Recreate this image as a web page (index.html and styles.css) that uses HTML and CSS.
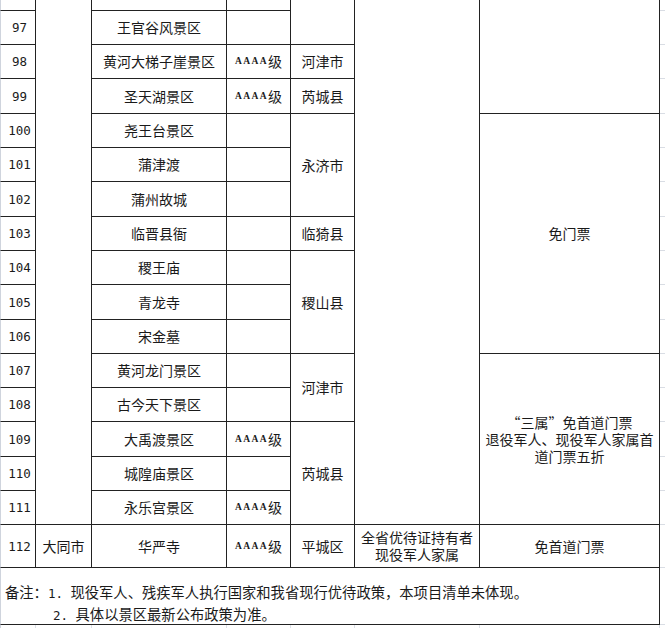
FILE: index.html
```html
<!DOCTYPE html>
<html lang="zh-CN">
<head>
<meta charset="utf-8">
<title>景区优待政策</title>
<link rel="stylesheet" href="styles.css">
</head>
<body>
<div class="sheet">
  <!-- row 96 (partial) -->
  <div class="c num"></div>
  <div class="c r16"></div>
  <div class="c"></div>
  <div class="c"></div>
  <div class="c r2"></div>
  <div class="c r16"></div>
  <div class="c r4"></div>
  <div class="tick"></div>

  <!-- 97 -->
  <div class="c num">97</div>
  <div class="c">王官谷风景区</div>
  <div class="c"></div>
  <div class="tick"></div>

  <!-- 98 -->
  <div class="c num">98</div>
  <div class="c">黄河大梯子崖景区</div>
  <div class="c"><span class="lvl">AAAA</span>级</div>
  <div class="c">河津市</div>
  <div class="tick"></div>

  <!-- 99 -->
  <div class="c num">99</div>
  <div class="c">圣天湖景区</div>
  <div class="c"><span class="lvl">AAAA</span>级</div>
  <div class="c">芮城县</div>
  <div class="tick"></div>

  <!-- 100 -->
  <div class="c num">100</div>
  <div class="c">尧王台景区</div>
  <div class="c"></div>
  <div class="c r3">永济市</div>
  <div class="c r7">免门票</div>
  <div class="tick"></div>

  <!-- 101 -->
  <div class="c num">101</div>
  <div class="c">蒲津渡</div>
  <div class="c"></div>
  <div class="tick"></div>

  <!-- 102 -->
  <div class="c num">102</div>
  <div class="c">蒲州故城</div>
  <div class="c"></div>
  <div class="tick"></div>

  <!-- 103 -->
  <div class="c num">103</div>
  <div class="c">临晋县衙</div>
  <div class="c"></div>
  <div class="c">临猗县</div>
  <div class="tick"></div>

  <!-- 104 -->
  <div class="c num">104</div>
  <div class="c">稷王庙</div>
  <div class="c"></div>
  <div class="c r3">稷山县</div>
  <div class="tick"></div>

  <!-- 105 -->
  <div class="c num">105</div>
  <div class="c">青龙寺</div>
  <div class="c"></div>
  <div class="tick"></div>

  <!-- 106 -->
  <div class="c num">106</div>
  <div class="c">宋金墓</div>
  <div class="c"></div>
  <div class="tick"></div>

  <!-- 107 -->
  <div class="c num">107</div>
  <div class="c">黄河龙门景区</div>
  <div class="c"></div>
  <div class="c r2">河津市</div>
  <div class="c r5 multi">“三属”免首道门票<br>退役军人、现役军人家属首<br>道门票五折</div>
  <div class="tick"></div>

  <!-- 108 -->
  <div class="c num">108</div>
  <div class="c">古今天下景区</div>
  <div class="c"></div>
  <div class="tick"></div>

  <!-- 109 -->
  <div class="c num">109</div>
  <div class="c">大禹渡景区</div>
  <div class="c"><span class="lvl">AAAA</span>级</div>
  <div class="c r3">芮城县</div>
  <div class="tick"></div>

  <!-- 110 -->
  <div class="c num">110</div>
  <div class="c">城隍庙景区</div>
  <div class="c"></div>
  <div class="tick"></div>

  <!-- 111 -->
  <div class="c num">111</div>
  <div class="c">永乐宫景区</div>
  <div class="c"><span class="lvl">AAAA</span>级</div>
  <div class="tick"></div>

  <!-- 112 -->
  <div class="c num">112</div>
  <div class="c">大同市</div>
  <div class="c">华严寺</div>
  <div class="c"><span class="lvl">AAAA</span>级</div>
  <div class="c">平城区</div>
  <div class="c multi">全省优待证持有者<br>现役军人家属</div>
  <div class="c">免首道门票</div>
  <div class="tick"></div>

  <!-- notes -->
  <div class="c note">
    <p class="note-line">备注：<span class="half">1. </span>现役军人、残疾军人执行国家和我省现行优待政策，本项目清单未体现。</p>
    <p class="note-line indent"><span class="half">2. </span>具体以景区最新公布政策为准。</p>
  </div>
  <div class="tick"></div>

  <!-- next (cut-off) row -->
  <div class="g first"></div>
  <div class="g"></div>
  <div class="g"></div>
  <div class="g"></div>
  <div class="g"></div>
  <div class="g"></div>
  <div class="g"></div>
  <div class="g end"></div>
</div>
</body>
</html>
```

FILE: styles.css
```css
html, body {
  margin: 0;
  padding: 0;
  background: #ffffff;
}

body {
  font-family: "Noto Sans CJK SC", "Noto Sans", sans-serif;
  font-size: 14px;
  color: #1a1a1a;
  overflow: hidden;
}

.sheet {
  display: grid;
  width: 665px;
  grid-template-columns: 36px 56px 135px 64px 64px 125px 180px 5px;
  grid-template-rows:
    11px
    34px 34px 35px 34px 34px 35px 34px 34px 35px 34px 34px 34px 35px 34px 34px
    43px 57px 10px;
}

.c {
  box-sizing: border-box;
  border-right: 1px solid #222222;
  border-bottom: 1px solid #222222;
  display: flex;
  align-items: center;
  justify-content: center;
  text-align: center;
  line-height: 17px;
  white-space: nowrap;
}

.num {
  border-left: 1px solid #cfd4dd;
  padding-left: 3px;
  font-family: "DejaVu Sans Mono", "Liberation Mono", monospace;
  font-size: 12.5px;
}

.lvl {
  font-family: "Liberation Serif", serif;
  font-weight: bold;
  font-size: 9.5px;
  letter-spacing: 1.4px;
}

.multi {
  line-height: 17px;
}

.r2 { grid-row: span 2; }
.r3 { grid-row: span 3; }
.r4 { grid-row: span 4; }
.r5 { grid-row: span 5; }
.r7 { grid-row: span 7; }
.r16 { grid-row: span 16; }

.tick {
  box-sizing: border-box;
  border-bottom: 1px solid #d9dde4;
}

.note {
  grid-column: span 7;
  border-left: 1px solid #cfd4dd;
  display: block;
  text-align: left;
  padding: 14px 0 0 4px;
  font-size: 14.3px;
  line-height: 20px;
}

.note-line {
  margin: 0;
}

.indent {
  padding-left: 48px;
}

.half {
  font-family: "DejaVu Sans Mono", "Liberation Mono", monospace;
  font-size: 12.5px;
}

.g {
  box-sizing: border-box;
  border-right: 1px solid #dde1e8;
}

.g.first {
  border-left: 1px solid #cfd4dd;
}

.g.end {
  border-right: none;
}
```
